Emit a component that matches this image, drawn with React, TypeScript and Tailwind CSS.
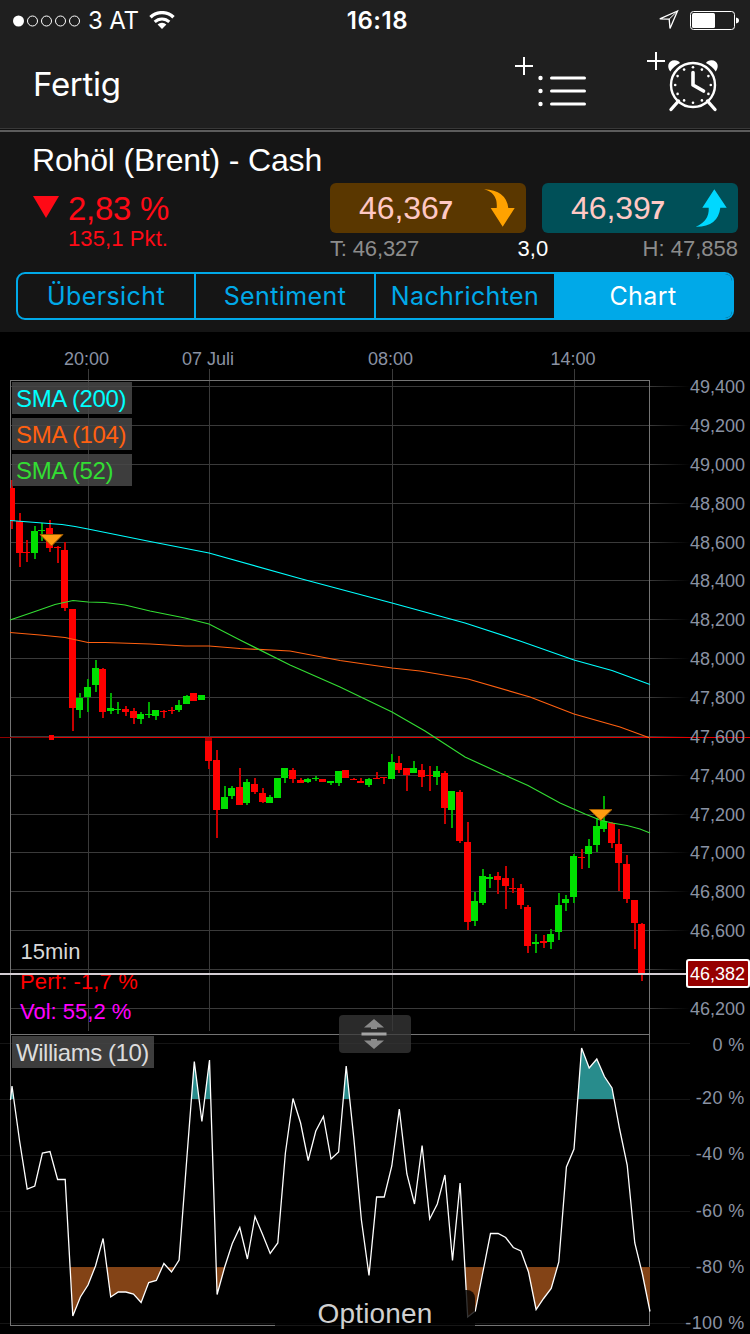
import React from "react";

const sans = "font-['Liberation_Sans',Arial,sans-serif]";
const inter = "font-[Inter,'Liberation_Sans',sans-serif]";

type Candle = [string, number, number, number, number];

// color, body top, body bottom, wick top, wick bottom
const candles: Candle[] = [
  ["r", 488, 521, 480, 529], ["r", 521, 553, 513, 567], ["r", 552, 553, 540, 562], ["g", 531, 553, 526, 559],
  ["g", 530, 531, 523, 541], ["r", 528, 548, 520, 552], ["r", 547, 548, 546, 563], ["r", 550, 608, 542, 611],
  ["r", 609, 708, 609, 731], ["g", 698, 710, 693, 718], ["g", 687, 697, 679, 712], ["g", 668, 685, 660, 692],
  ["r", 669, 712, 668, 718], ["g", 708, 711, 693, 714], ["g", 709, 710, 702, 714], ["r", 709, 712, 706, 716],
  ["r", 711, 718, 708, 724], ["g", 714, 719, 712, 724], ["g", 714, 715, 702, 718], ["g", 710, 716, 710, 720],
  ["r", 711, 712, 710, 718], ["r", 710, 711, 707, 714], ["g", 705, 710, 700, 712], ["g", 696, 704, 695, 704],
  ["r", 693, 701, 693, 701], ["g", 695, 700, 695, 700], ["r", 738, 761, 738, 769], ["r", 760, 810, 750, 838],
  ["g", 797, 809, 786, 809], ["g", 788, 796, 786, 799], ["r", 787, 805, 768, 805], ["g", 782, 803, 779, 805],
  ["r", 784, 792, 778, 794], ["r", 793, 802, 788, 803], ["g", 797, 803, 795, 803], ["g", 778, 798, 778, 798],
  ["g", 768, 778, 768, 783], ["r", 770, 779, 768, 783], ["r", 780, 783, 778, 783], ["g", 779, 782, 778, 783],
  ["g", 778, 779, 776, 781], ["r", 779, 782, 779, 782], ["g", 781, 783, 781, 785], ["g", 771, 783, 771, 786],
  ["r", 770, 778, 770, 778], ["r", 779, 780, 778, 780], ["r", 781, 783, 778, 783], ["g", 779, 785, 778, 787],
  ["r", 778, 779, 772, 779], ["r", 777, 778, 777, 784], ["g", 762, 779, 754, 779], ["r", 763, 770, 756, 773],
  ["r", 768, 775, 768, 791], ["g", 768, 773, 761, 773], ["r", 770, 777, 764, 787], ["r", 775, 776, 766, 791],
  ["g", 771, 777, 766, 785], ["r", 773, 808, 771, 824], ["g", 791, 810, 791, 828], ["r", 792, 841, 790, 843],
  ["r", 842, 922, 822, 930], ["g", 901, 921, 892, 926], ["g", 876, 903, 869, 905], ["g", 877, 879, 874, 888],
  ["r", 876, 880, 872, 894], ["r", 878, 886, 866, 909], ["r", 888, 889, 878, 893], ["r", 888, 905, 884, 909],
  ["r", 907, 946, 905, 953], ["g", 942, 944, 934, 953], ["r", 941, 943, 935, 948], ["g", 934, 942, 929, 949],
  ["g", 905, 932, 893, 940], ["g", 899, 903, 895, 911], ["g", 856, 897, 854, 903], ["r", 857, 858, 849, 869],
  ["g", 846, 854, 839, 868], ["g", 826, 845, 818, 852], ["g", 821, 829, 796, 832], ["r", 823, 843, 822, 848],
  ["r", 844, 863, 829, 891], ["r", 864, 899, 855, 903], ["r", 900, 923, 900, 949], ["r", 924, 974, 923, 981],
];

const williams = [
  1086, 1141, 1189, 1186, 1153, 1151.5, 1179.5, 1179.5, 1316, 1297, 1285, 1266, 1238.5, 1297, 1292, 1292, 1294,
  1302.5, 1282.5, 1280.5, 1263.5, 1272, 1260, 1160, 1061.5, 1121.5, 1060, 1294.5, 1267, 1243.5, 1227.5, 1259,
  1216.5, 1234.5, 1253.5, 1243, 1153, 1098.5, 1123, 1160.5, 1131, 1116.5, 1159, 1152, 1066, 1138, 1220, 1275.5,
  1197, 1197, 1166, 1109, 1174, 1204, 1145.5, 1219, 1204, 1175, 1260.5, 1183, 1317, 1311, 1272, 1233.5, 1233.5,
  1237.5, 1247.5, 1251, 1272, 1309.5, 1298.5, 1288.5, 1262, 1167, 1149, 1048, 1068, 1059, 1076.5, 1088, 1129,
  1165, 1243, 1274, 1311.5,
];

const priceLabels = [
  "49,400", "49,200", "49,000", "48,800", "48,600", "48,400", "48,200", "48,000", "47,800",
  "47,600", "47,400", "47,200", "47,000", "46,800", "46,600", "", "46,200",
];
const priceY = [386, 425, 464, 503, 542, 580, 619, 658, 697, 736, 775, 814, 852, 891, 930, 969, 1008];

const times = [
  { x: 88, tx: 86.5, label: "20:00" },
  { x: 209, tx: 208, label: "07 Juli" },
  { x: 392, tx: 390.5, label: "08:00" },
  { x: 574, tx: 573, label: "14:00" },
];

const percents = [
  { y: 1043, ty: 1051, label: "0 %" },
  { y: 1099, ty: 1104, label: "-20 %" },
  { y: 1155, ty: 1160, label: "-40 %" },
  { y: 1211, ty: 1217, label: "-60 %" },
  { y: 1267, ty: 1273, label: "-80 %" },
  { y: 1323, ty: 1329, label: "-100 %" },
];

const indicators = [
  { label: "SMA (200)", color: "text-[#00ffff]" },
  { label: "SMA (104)", color: "text-[#ff6010]" },
  { label: "SMA (52)", color: "text-[#33dd33]" },
];

const StatusBar = () => (
  <div className={`${inter} grid h-10 grid-cols-3 items-center text-white`}>
    <div className="flex items-center pl-[13px] pt-px">
      <svg width="68" height="12" viewBox="0 0 68 12" fill="none" stroke="white">
        <circle cx="5.5" cy="6" r="5.5" fill="white" stroke="none" />
        {[19.5, 33.5, 47.5, 61.5].map((cx) => (
          <circle key={cx} cx={cx} cy="6" r="5" />
        ))}
      </svg>
      <span className="ml-[7px] w-[61px] whitespace-nowrap text-[24px] tracking-[-0.2px]">3 AT</span>
      <svg width="26" height="19" viewBox="0 0 26 19" fill="none" stroke="white" strokeWidth="3.4">
        <path d="M1.5 6.3a16.5 16.5 0 0 1 23 0" />
        <path d="M5.7 10.9a10.5 10.5 0 0 1 14.6 0" strokeWidth="3" />
        <path d="M13 18l-4.4-4.5a6.4 6.4 0 0 1 8.8 0z" fill="white" stroke="none" />
      </svg>
    </div>
    <div className="pl-[5px] pt-[2px] text-center text-[24px] font-semibold tracking-[0.6px]">16:18</div>
    <div className="flex items-center justify-end pr-[11px]">
      <svg width="22" height="22" viewBox="0 0 22 22" fill="none" stroke="white" strokeWidth="1.3">
        <path d="M19.5 2L1.8 9.8l9.4.3.8 9.4z" />
        <path d="M19.5 2l-8.3 8.1" strokeWidth="1" />
      </svg>
      <svg className="ml-[10px] mt-px" width="49" height="19" viewBox="0 0 49 19">
        <rect x=".5" y=".5" width="44" height="18" rx="3" fill="none" stroke="white" />
        <rect x="2" y="2" width="23" height="15" rx="1.5" fill="white" />
        <path d="M46 6.5q3 .7 3 3t-3 3z" fill="white" />
      </svg>
    </div>
  </div>
);

const NavBar = () => (
  <div className="flex h-[88px] items-start justify-between">
    <div className={`${inter} pl-[33px] pt-[22px] text-[33px] leading-[44px] tracking-[-0.3px] text-white`}>Fertig</div>
    <div className="flex gap-[59px] pr-[30px] pt-2">
      <svg width="74" height="66" viewBox="513 48 74 66" stroke="white" fill="white">
        <path d="M515 66h18M524 57v18" strokeWidth="2" />
        {[78, 91, 104].map((y) => (
          <g key={y}>
            <circle cx="540.5" cy={y} r="2.2" stroke="none" />
            <path d={`M551.5 ${y}h33`} strokeWidth="3" strokeLinecap="round" />
          </g>
        ))}
      </svg>
      <svg width="74" height="66" viewBox="646 48 74 66" stroke="white" fill="none">
        <path d="M647 61h18M656 52v18" strokeWidth="2" />
        <path d="M670.3 71.500C666.500 67 668 60.500 674.500 60.300Q678.500 60.300 680 63Q673.800 66 670.300 71.500zM715.700 71.500C719.500 67 718 60.500 711.500 60.300Q707.500 60.300 706 63Q712.200 66 715.700 71.500z" fill="white" stroke="none" />
        <circle cx="693" cy="85" r="22" strokeWidth="2.4" />
        <path d="M678.5 101l-7.5 8.5M707.5 101l7.5 8.5" strokeWidth="3.4" strokeLinecap="round" />
        <path d="M693 72.5V85l10.5 6" strokeWidth="3.6" strokeLinecap="round" strokeLinejoin="round" />
        {Array.from({ length: 12 }).map((_, i) => (
          <circle
            key={i}
            cx={693 + 17.8 * Math.sin((i * Math.PI) / 6)}
            cy={85 - 17.8 * Math.cos((i * Math.PI) / 6)}
            r="1.3"
            fill="white"
            stroke="none"
          />
        ))}
      </svg>
    </div>
  </div>
);

const QuotePanel = () => (
  <div className="h-[200px] bg-[#151515] pt-[6px]">
    <h1 className="h-[45px] pl-8 text-[32px] leading-[44px] tracking-[-0.17px] text-white">Rohöl (Brent) - Cash</h1>
    <div className="flex h-[89px] text-[#ff0a16]">
      <svg className="ml-8 mt-3" width="28" height="24" viewBox="0 0 28 24">
        <path d="M1 1h26L14 23z" fill="#ff0a16" />
      </svg>
      <div className="w-[270px] pl-2">
        <div className="pt-[6px] text-[33px] leading-[40px] tracking-[-0.3px]">2,83 %</div>
        <div className="text-[22px] leading-[20px] tracking-[0.1px]">135,1 Pkt.</div>
      </div>
      <div className="w-[408px]">
        <div className="flex gap-4 text-[#ffc8c4]">
          <div className="flex h-[50px] w-[196px] items-center rounded-[6px] bg-[#5a3700] pl-[29px]">
            <span className="w-[123px] whitespace-nowrap text-[32px] tracking-[-0.1px]">46,36<b className="text-[26px]">7</b></span>
            <svg width="34" height="40" viewBox="482 188 34 40">
              <path d="M484 189.3Q506 190 508.3 208H514.7L502.7 226.7 490.7 208H496.7Q498 193 484 189.3z" fill="#ffa200" />
            </svg>
          </div>
          <div className="flex h-[50px] w-[196px] items-center rounded-[6px] bg-[#005058] pl-[29px]">
            <span className="w-[123px] whitespace-nowrap text-[32px] tracking-[-0.1px]">46,39<b className="text-[26px]">7</b></span>
            <svg width="34" height="40" viewBox="694 186 34 40">
              <path d="M695.7 224.7Q718 225 720.3 205.7H726.7L714.3 187.3 702.3 205.7H708.7Q709.5 219 695.7 224.7z" fill="#00d8ff" />
            </svg>
          </div>
        </div>
        <div className="flex justify-between text-[22px] leading-[31px] text-[#8c8c8c]">
          <span className="tracking-[-0.15px]">T: 46,327</span>
          <span className="pl-1 text-white">3,0</span>
          <span>H: 47,858</span>
        </div>
      </div>
    </div>
    <div className={`${inter} mx-4 flex h-12 overflow-hidden rounded-[9px] border-2 border-[#00a9e8] text-center text-[25px] leading-[45px] tracking-[0.4px] text-[#00a9e8]`}>
      <div className="w-[178px] border-r-2 border-[#00a9e8]">Übersicht</div>
      <div className="w-[180px] border-r-2 border-[#00a9e8]">Sentiment</div>
      <div className="w-[178px]">Nachrichten</div>
      <div className="flex-1 bg-[#00a9e8] text-white">Chart</div>
    </div>
  </div>
);

const PriceChart = () => {
  const line = williams.map((y, i) => `${(12 + i * 7.595).toFixed(1)},${y}`).join(" ");

  return (
    <svg className="block" width="750" height="1002" viewBox="0 332 750 1002">
      <defs>
        <linearGradient id="fade" x1="650" x2="690" y1="0" y2="0" gradientUnits="userSpaceOnUse">
          <stop offset="0" stopColor="#3a3a3a" />
          <stop offset="1" stopColor="#3a3a3a" stopOpacity="0" />
        </linearGradient>
        <clipPath id="plot"><rect x="10" y="380" width="640" height="954" /></clipPath>
        <clipPath id="over"><rect x="10" y="1030" width="640" height="69" /></clipPath>
        <clipPath id="under"><rect x="10" y="1267" width="640" height="60" /></clipPath>
      </defs>

      {/* grid */}
      {priceY.map((y) => (
        <g key={y}>
          <rect x="10" y={y} width="640" height="1" fill="#3a3a3a" />
          <rect x="650" y={y} width="40" height="1" fill="url(#fade)" />
        </g>
      ))}
      {times.map((t) => (
        <rect key={t.x} x={t.x} y="369" width="1" height="662" fill="#3a3a3a" />
      ))}
      {percents.map((p) => (
        <rect key={p.y} x="0" y={p.y} width="690" height="1" fill="#151515" />
      ))}

      {/* frame */}
      <g fill="#747474">
        <rect x="10" y="380" width="640" height="1" />
        <rect x="10" y="1034" width="640" height="1" />
        <rect x="10" y="1325" width="640" height="1" />
        <rect x="10" y="380" width="1" height="946" />
        <rect x="649" y="380" width="1" height="946" />
      </g>

      {/* candles */}
      <g clipPath="url(#plot)" shapeRendering="crispEdges">
        {candles.map(([c, top, bottom, high, low], i) => {
          const x = Math.floor(8.55 + i * 7.593);
          return (
            <g key={i}>
              <rect x={x + 3} y={high} width="2" height={low - high} fill={c === "r" ? "#c80000" : "#00a800"} />
              <rect x={x} y={top} width="7" height={bottom - top} fill={c === "r" ? "#ff0000" : "#00e000"} />
            </g>
          );
        })}
      </g>

      {/* previous close */}
      <rect x="0" y="737" width="50" height="1" fill="#900000" />
      <rect x="50" y="737" width="700" height="1" fill="#e80000" />
      <rect x="49" y="735" width="5" height="5" fill="#ff0000" />
      <rect x="205" y="738" width="7" height="3" fill="#a80000" />

      {/* moving averages */}
      <g fill="none" strokeWidth="1.15">
        <path stroke="#00ffff" d="M10 520.5L62 524.5 75 526.5 88 529 150 541.5 209 553 300 578.5 392 603 465 623 520 641 574 660 612 670.500 650 684.500" />
        <path stroke="#ff6010" d="M10 632.500L40 635 65 637.500 88 642.500 105 642.500 150 644 185 646 209 646 240 648.500 290 651 340 660.500 392 668 420 671 468 679 530 697 574 714 620 727 650 738" />
        <path stroke="#33dd33" d="M10 620L35 611.500 55 604.500 73 600.500 88 602 105 602.500 125 605 150 611 185 618 209 624 240 640 290 665 340 687 392 712 425 731 465 757 500 773 528 785.500 560 803 585 814 600 820 612 823 627 825.500 640 829 650 833" />
      </g>

      <g fill="#ff9c10" stroke="#a05c00" strokeWidth="1">
        <path d="M40 534.500h23l-11.500 11.500z" />
        <path d="M589.500 809.500h22.500l-11.200 11z" />
      </g>

      <g fontSize="22">
        <text x="20.500" y="959" fill="#d8d8d8">15min</text>
        <text x="20" y="989" fill="#ff0000" letterSpacing="0.150">Perf: -1,7 %</text>
        <text x="20" y="1019" fill="#ff00ff">Vol: 55,2 %</text>
      </g>

      {/* williams %R */}
      <polygon clipPath="url(#over)" fill="#288c8c" points={`10,1100 ${line} 650,1400 10,1400`} />
      <polygon clipPath="url(#under)" fill="#834316" points={`10,1100 ${line} 650,1000 10,1000`} />
      <polyline fill="none" stroke="white" strokeWidth="1.3" points={`10.500,1100 ${line}`} />

      {/* axis labels */}
      <g fontSize="18" fill="#8a92a3">
        {times.map((t) => (
          <text key={t.label} x={t.tx} y="365" textAnchor="middle">{t.label}</text>
        ))}
        {priceLabels.map((label, i) => (
          <text key={i} x="745" y={priceY[i] + 7} textAnchor="end">{label}</text>
        ))}
        {percents.map((p) => (
          <text key={p.label} x="744.500" y={p.ty} textAnchor="end" letterSpacing="0.350">{p.label}</text>
        ))}
      </g>

      {/* last price */}
      <rect x="0" y="973" width="687" height="2" fill="#d4ced4" />
      <rect x="687" y="960" width="62" height="27" rx="2" fill="#960000" stroke="white" strokeWidth="2" />
      <text x="745" y="980" fontSize="18" fill="white" textAnchor="end">46,382</text>
    </svg>
  );
};

const App: React.FC = () => {
  return (
    <div className={`${sans} h-[1334px] w-[750px] overflow-hidden bg-black`}>
      <div className="h-[132px] border-b-2 border-[#5c5c5c] bg-[#1f1f1f]">
        <StatusBar />
        <NavBar />
        <div className="h-px bg-[#383838]" />
        <div className="h-px bg-[#101010]" />
      </div>
      <QuotePanel />
      <div className="relative">
        <PriceChart />
        <div className="absolute left-3 top-[50px] flex flex-col gap-1 text-[24px] tracking-[-0.35px]">
          {indicators.map((item) => (
            <div key={item.label} className={`${item.color} h-8 w-[120px] whitespace-nowrap bg-[#484848]/85 pl-1 leading-[34px]`}>
              {item.label}
            </div>
          ))}
        </div>
        <div className="absolute left-3 top-[704px] h-8 w-[142px] whitespace-nowrap bg-[#484848]/85 pl-1 text-[24px] leading-[34px] tracking-[-0.45px] text-[#dcdcdc]">
          Williams (10)
        </div>
        <div className="absolute left-[339px] top-[683px] flex h-[38px] w-[72px] items-center justify-center rounded-[4px] bg-[#383838]/75">
          <svg className="-ml-[2px]" width="26" height="30" viewBox="0 0 26 30" fill="#8a8a8a">
            <path d="M13 0l10 8.500h-7V10h-6V8.500H3zM13 30l10-8.500h-7V20h-6v1.500H3z" />
            <rect x=".5" y="13.500" width="25" height="3" fill="#a4a4a4" />
          </svg>
        </div>
        <div className="absolute left-[275px] top-[958px] h-[44px] w-[200px] rounded-t-[8px] bg-black/80 text-center text-[28px] leading-[48px] tracking-[0.15px] text-[#d0d0d0]">
          Optionen
        </div>
      </div>
    </div>
  );
};

export default App;
